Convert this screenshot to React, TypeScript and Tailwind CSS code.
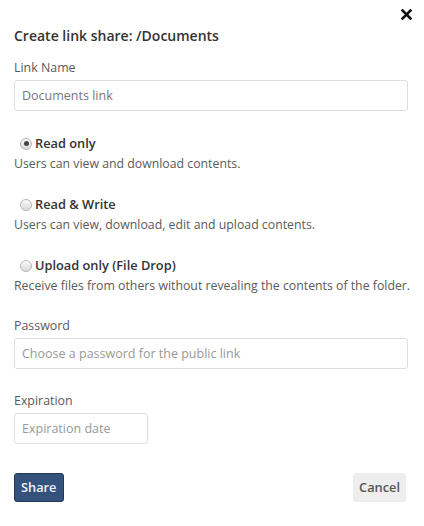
import { useState } from "react";

const options = [
  {
    id: "read",
    label: "Read only",
    desc: "Users can view and download contents.",
  },
  {
    id: "write",
    label: "Read & Write",
    desc: "Users can view, download, edit and upload contents.",
  },
  {
    id: "drop",
    label: "Upload only (File Drop)",
    desc: "Receive files from others without revealing the contents of the folder.",
  },
];

function Radio({ checked }: { checked: boolean }) {
  return (
    <span className="flex h-[12px] w-[12px] items-center justify-center rounded-full border border-[#b5b5b5] bg-gradient-to-b from-[#fafafa] to-[#d9d9d9]">
      {checked && <span className="h-[5px] w-[5px] rounded-full bg-[#444]" />}
    </span>
  );
}

export default function App() {
  const [perm, setPerm] = useState("read");

  return (
    <div
      className="min-h-[526px] w-[424px] bg-white text-[#333]"
      style={{ fontFamily: '"Open Sans", sans-serif' }}
    >
      <div className="flex justify-end pr-[12px] pt-[9px]">
        <button className="text-[#111]">
          <svg width="11" height="11" viewBox="0 0 11 11">
            <path
              d="M1.5 1.5 L9.5 9.5 M9.5 1.5 L1.5 9.5"
              stroke="currentColor"
              strokeWidth="2.6"
              strokeLinecap="square"
            />
          </svg>
        </button>
      </div>

      <div className="px-[14px]">
        <h3 className="mt-[6px] text-[14px] font-semibold leading-[20px] text-[#333]">
          Create link share: /Documents
        </h3>

        {/* Link name */}
        <label className="mt-[13px] block text-[12.4px] leading-[17px] text-[#5a5a5a]">
          Link Name
        </label>
        <input
          className="mt-[4px] h-[31px] w-[394px] rounded-[3px] border border-[#ddd] px-[7px] text-[12.5px] text-[#555] placeholder-[#777] outline-none"
          placeholder="Documents link"
        />

        {/* Permissions */}
        <div className="mt-[24px] flex flex-col gap-[24px]">
          {options.map((o) => (
            <div key={o.id}>
              <label
                className="flex cursor-pointer items-center gap-[3px] pl-[6px] text-[12.8px] font-semibold leading-[17px] text-[#333]"
                onClick={() => setPerm(o.id)}
              >
                <Radio checked={perm === o.id} />
                {o.label}
              </label>
              <p className="mt-[3px] whitespace-nowrap text-[12.3px] leading-[17px] text-[#5a5a5a]">
                {o.desc}
              </p>
            </div>
          ))}
        </div>

        {/* Password */}
        <label className="mt-[23px] block text-[12.4px] leading-[17px] text-[#5a5a5a]">
          Password
        </label>
        <input
          type="password"
          className="mt-[4px] h-[31px] w-[394px] rounded-[3px] border border-[#ddd] px-[7px] text-[12.5px] placeholder-[#999] outline-none"
          placeholder="Choose a password for the public link"
        />

        {/* Expiration */}
        <label className="mt-[23px] block text-[12.4px] leading-[17px] text-[#5a5a5a]">
          Expiration
        </label>
        <input
          className="mt-[4px] h-[31px] w-[134px] rounded-[3px] border border-[#ddd] px-[7px] text-[12.5px] placeholder-[#999] outline-none"
          placeholder="Expiration date"
        />

        <div className="mt-[29px] flex items-center justify-between pr-[4px]">
          <button className="h-[29px] rounded-[3px] border border-[#22385a] bg-[#34527c] px-[6px] text-[12.8px] font-semibold text-[#eef2f7]">
            Share
          </button>
          <button className="h-[29px] rounded-[3px] bg-[#eeeeee] px-[6px] text-[12.8px] font-semibold text-[#555]">
            Cancel
          </button>
        </div>
      </div>
    </div>
  );
}
